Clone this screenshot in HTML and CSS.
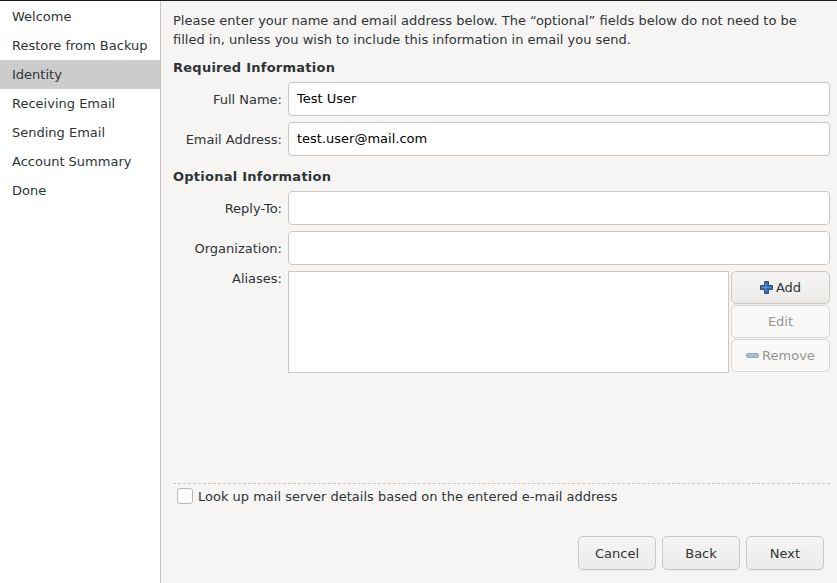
FILE: index.html
```html
<!DOCTYPE html>
<html>
<head>
<meta charset="utf-8">
<link rel="stylesheet" href="styles.css">
</head>
<body>
<div class="window">
  <nav class="sidebar">
    <div class="nav-item">Welcome</div>
    <div class="nav-item">Restore from Backup</div>
    <div class="nav-item active">Identity</div>
    <div class="nav-item">Receiving Email</div>
    <div class="nav-item">Sending Email</div>
    <div class="nav-item">Account Summary</div>
    <div class="nav-item">Done</div>
  </nav>
  <main class="main">
    <p class="intro">Please enter your name and email address below. The “optional” fields below do not need to be filled in, unless you wish to include this information in email you send.</p>
    <h2 class="section-title">Required Information</h2>
    <div class="form-grid">
      <label class="field-label">Full Name:</label>
      <div class="input">Test User</div>
      <label class="field-label">Email Address:</label>
      <div class="input">test.user@mail.com</div>
    </div>
    <h2 class="section-title second">Optional Information</h2>
    <div class="form-grid">
      <label class="field-label">Reply-To:</label>
      <div class="input"></div>
      <label class="field-label">Organization:</label>
      <div class="input"></div>
      <label class="field-label top">Aliases:</label>
      <div class="aliases">
        <div class="alias-list"></div>
        <div class="alias-buttons">
          <button class="btn small"><svg class="icon" width="13" height="13" viewBox="0 0 13 13"><path d="M4.5 0.5h4v4h4v4h-4v4h-4v-4h-4v-4h4z" fill="#3d6cb0" stroke="#2a4f86" stroke-width="1"/><path d="M5.5 2v8M2 6.5h9" stroke="#8fb0dd" stroke-width="0.8" opacity="0.6"/></svg>Add</button>
          <button class="btn small disabled">Edit</button>
          <button class="btn small disabled"><svg class="icon" width="13" height="5" viewBox="0 0 13 5"><rect x="0.5" y="0.5" width="12" height="4" rx="1.5" fill="#a9bdd6" stroke="#93a9c4" stroke-width="1"/></svg>Remove</button>
        </div>
      </div>
    </div>
    <div class="bottom">
      <div class="lookup">
        <span class="checkbox"></span>
        <span>Look up mail server details based on the entered e-mail address</span>
      </div>
      <div class="actions">
        <button class="btn action">Cancel</button>
        <button class="btn action">Back</button>
        <button class="btn action">Next</button>
      </div>
    </div>
  </main>
</div>
</body>
</html>
```
FILE: styles.css
```css
* { box-sizing: border-box; }
html, body {
  margin: 0;
  padding: 0;
  width: 837px;
  height: 583px;
  overflow: hidden;
  font-family: "DejaVu Sans", sans-serif;
  font-size: 13px;
  color: #2e3436;
}
.window {
  display: flex;
  height: 583px;
  border-top: 1px solid #1a1a1a;
  background: #f6f5f4;
}
.sidebar {
  width: 161px;
  flex: none;
  background: #ffffff;
  border-right: 1px solid #c8c3be;
  padding-top: 1px;
}
.nav-item {
  height: 29px;
  line-height: 29px;
  padding-left: 12px;
  white-space: nowrap;
}
.nav-item.active {
  background: #cccccc;
}
.main {
  flex: 1;
  display: flex;
  flex-direction: column;
  padding: 10px 7px 13px 12px;
}
.intro {
  margin: 0;
  line-height: 19px;
  padding-right: 20px;
}
.section-title {
  margin: 10px 0 0 0;
  font-size: 13px;
  font-weight: bold;
  line-height: 18px;
  letter-spacing: 0.25px;
}
.section-title.second {
  margin-top: 12px;
}
.form-grid {
  display: grid;
  grid-template-columns: 109px 1fr;
  column-gap: 6px;
  row-gap: 6px;
  margin-top: 5px;
}
.field-label {
  text-align: right;
  align-self: center;
  white-space: nowrap;
}
.field-label.top {
  align-self: start;
  margin-top: 0px;
}
.input {
  height: 34px;
  background: #ffffff;
  border: 1px solid #cdc7c2;
  border-radius: 4px;
  padding: 0 8px;
  line-height: 32px;
  color: #000;
}
.aliases {
  display: flex;
  gap: 2px;
  height: 102px;
}
.alias-list {
  flex: 1;
  background: #ffffff;
  border: 1px solid #cdc7c2;
}
.alias-buttons {
  width: 99px;
  display: flex;
  flex-direction: column;
  gap: 1px;
}
.btn {
  font-family: "DejaVu Sans", sans-serif;
  font-size: 13px;
  color: #2e3436;
  border: 1px solid #cdc7c2;
  border-radius: 5px;
  background: linear-gradient(#f6f5f4, #edebe9);
  box-shadow: 0 1px 0 rgba(0,0,0,0.04);
  display: flex;
  align-items: center;
  justify-content: center;
  gap: 3px;
  padding: 0;
}
.btn.small {
  height: 33px;
}
.btn.disabled {
  background: #faf9f8;
  border-color: #dad6d2;
  color: #929595;
  box-shadow: none;
}
.icon { flex: none; }
.bottom {
  margin-top: auto;
}
.lookup {
  border-top: 1px dashed #c8c4c0;
  display: flex;
  align-items: center;
  gap: 5px;
  padding: 2px 0 0 4px;
  height: 20px;
  box-sizing: content-box;
}
.checkbox {
  width: 16px;
  height: 16px;
  background: #ffffff;
  border: 1px solid #bdb7b2;
  border-radius: 3px;
  flex: none;
}
.actions {
  display: flex;
  justify-content: flex-end;
  gap: 6px;
  margin-top: 30px;
  padding-right: 6px;
}
.btn.action {
  width: 78px;
  height: 34px;
}
```
